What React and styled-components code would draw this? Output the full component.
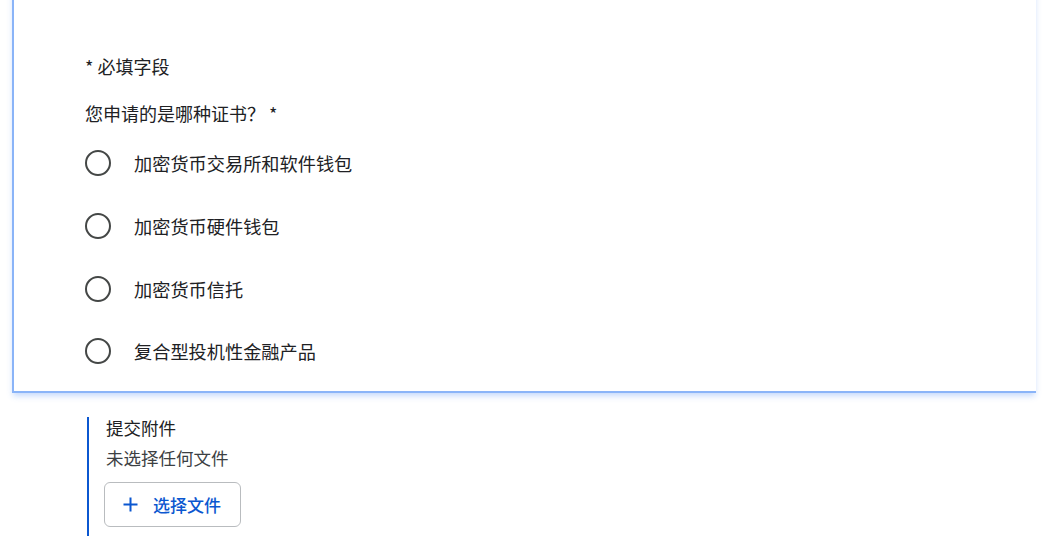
import React from "react";
import styled, { createGlobalStyle } from "styled-components";

const Global = createGlobalStyle`
  html, body { margin: 0; padding: 0; background: #ffffff; }
  body {
    font-family: "Noto Sans CJK SC", "Noto Sans", Roboto, sans-serif;
    color: #202124;
    overflow: hidden;
  }
`;

const Page = styled.div`
  display: flex;
  flex-direction: column;
  width: 1050px;
  height: 549px;
  overflow: hidden;
`;

const Card = styled.section`
  margin: -20px 14px 0 12px;
  border-left: 2px solid #8ab4f8;
  border-bottom: 2px solid #8ab4f8;
  background: #fff;
  box-shadow: 0 4px 6px -1px rgba(66, 133, 244, 0.3);
  padding: 74px 24px 8px 71px;
  display: flex;
  flex-direction: column;
`;

const Required = styled.div`
  font-size: 18px;
  line-height: 24px;
  color: #202124;
  margin-bottom: 23px;
`;

const Question = styled.div`
  font-size: 18px;
  line-height: 24px;
  color: #202124;
  margin-bottom: 7px;
`;

const Options = styled.div`
  display: flex;
  flex-direction: column;
`;

const Option = styled.label`
  display: flex;
  align-items: center;
  height: 62.7px;
  gap: 23px;
  cursor: pointer;
`;

const Radio = styled.span`
  width: 26px;
  height: 26px;
  box-sizing: border-box;
  border: 2px solid #444746;
  border-radius: 50%;
  flex: none;
`;

const OptionText = styled.span`
  font-size: 18.2px;
  line-height: 24px;
  color: #202124;
`;

const Attach = styled.section`
  margin: 24px 0 0 87px;
  border-left: 2px solid #0b57d0;
  padding: 0 0 9px 17px;
  display: flex;
  flex-direction: column;
  align-items: flex-start;
`;

const AttachTitle = styled.div`
  font-size: 17.5px;
  line-height: 22px;
  color: #202124;
`;

const AttachNote = styled.div`
  font-size: 17.5px;
  line-height: 22px;
  color: #3c4043;
  margin-top: 8px;
`;

const FileButton = styled.button`
  margin: 13px 0 0 -2px;
  height: 45px;
  box-sizing: border-box;
  display: flex;
  align-items: center;
  gap: 15px;
  padding: 0 19px 0 18px;
  border: 1px solid #b9bcbf;
  border-radius: 6px;
  background: #fff;
  color: #0b57d0;
  font-family: "Noto Sans CJK SC", "Noto Sans", sans-serif;
  font-size: 17px;
  font-weight: 500;
  cursor: pointer;
`;

const options = [
  "加密货币交易所和软件钱包",
  "加密货币硬件钱包",
  "加密货币信托",
  "复合型投机性金融产品",
];

export default function App() {
  return (
    <Page>
      <Global />
      <Card>
        <Required>* 必填字段</Required>
        <Question>您申请的是哪种证书？ *</Question>
        <Options>
          {options.map((o) => (
            <Option key={o}>
              <Radio />
              <OptionText>{o}</OptionText>
            </Option>
          ))}
        </Options>
      </Card>
      <Attach>
        <AttachTitle>提交附件</AttachTitle>
        <AttachNote>未选择任何文件</AttachNote>
        <FileButton type="button">
          <svg width="15" height="15" viewBox="0 0 15 15" aria-hidden="true">
            <path d="M7.5 0.5v14M0.5 7.5h14" stroke="#0b57d0" strokeWidth="2" fill="none" />
          </svg>
          选择文件
        </FileButton>
      </Attach>
    </Page>
  );
}
